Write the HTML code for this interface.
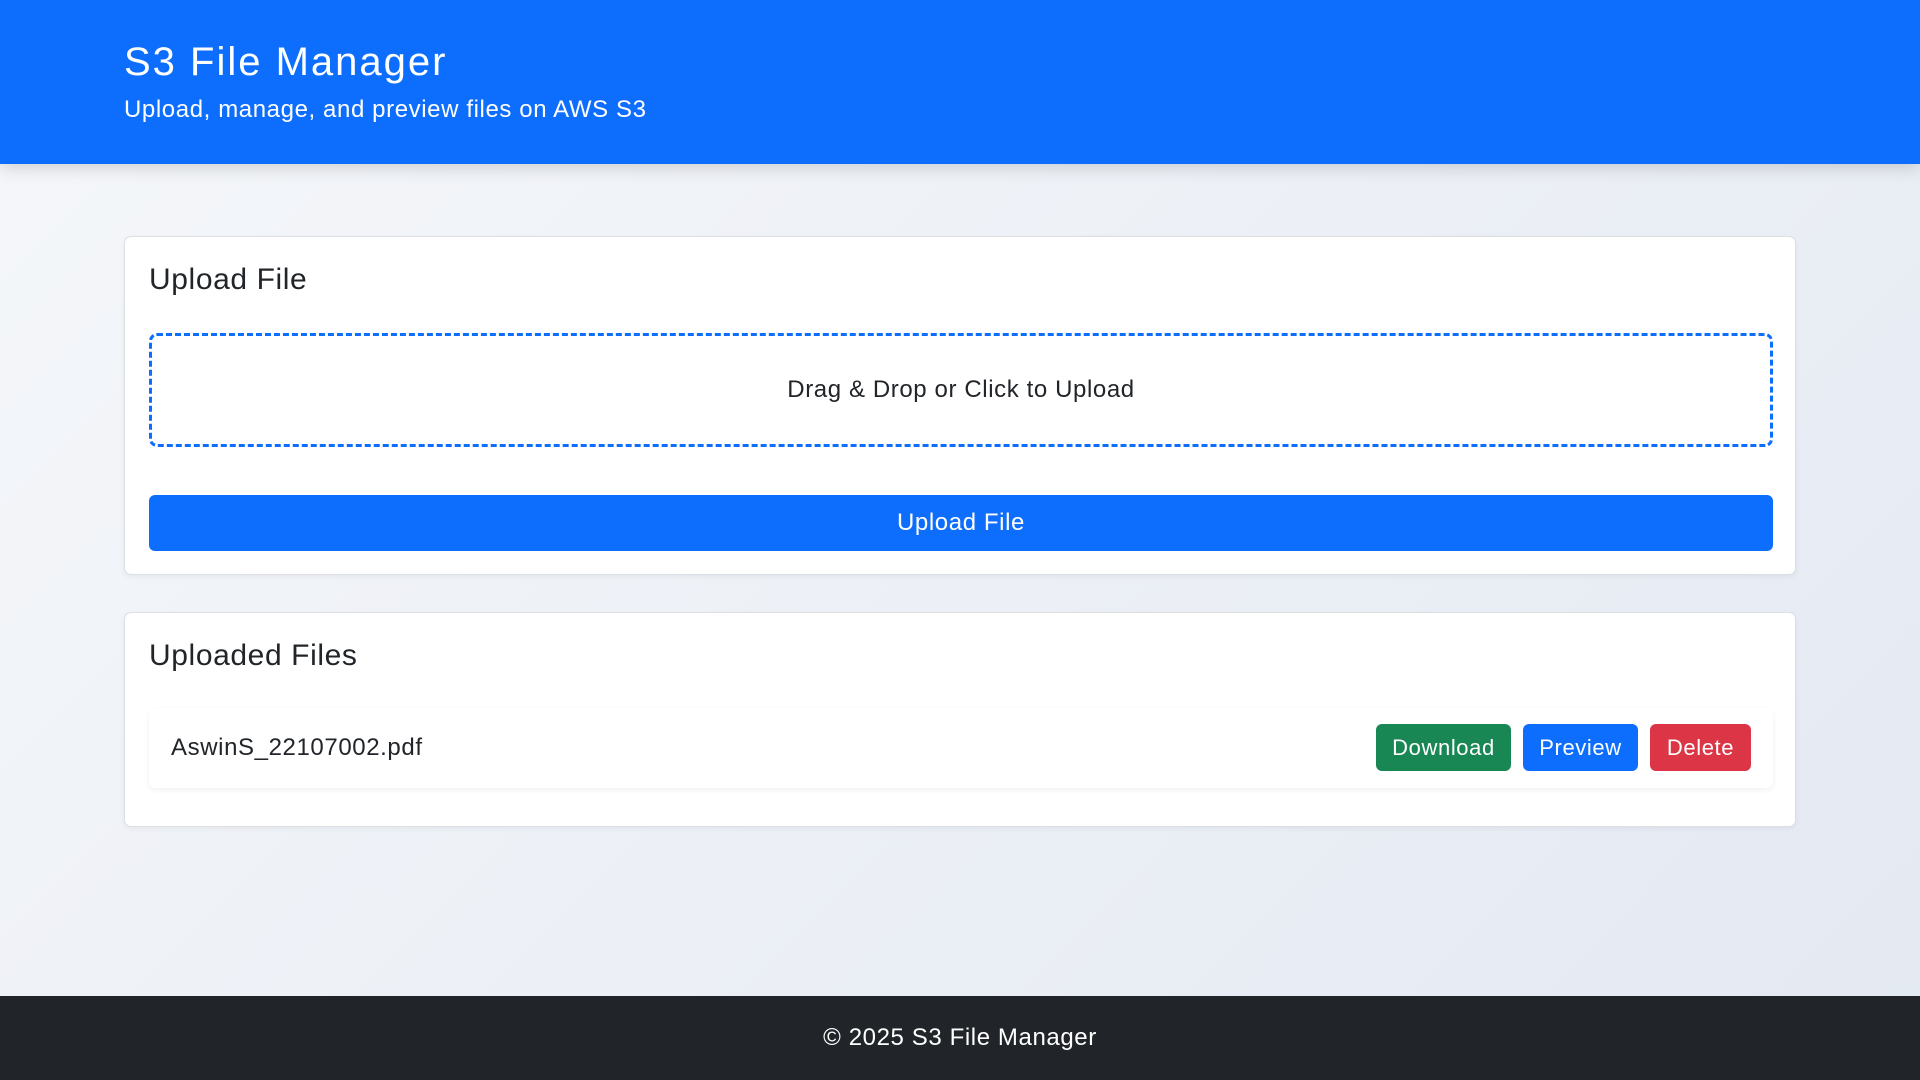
<!DOCTYPE html>
<html><head><meta charset="utf-8"><style>
*{box-sizing:border-box;margin:0;padding:0}
body{width:1920px;height:1080px;overflow:hidden;font-family:"Liberation Sans",sans-serif;background:linear-gradient(135deg,#f5f7fa,#e4e9f2);position:relative;color:#212529;letter-spacing:0.6px}
.hdr{position:absolute;left:0;top:0;width:1920px;height:164px;background:#0d6efd;color:#fff;box-shadow:0 4px 16px rgba(0,0,0,.15)}
.hdr h1{position:absolute;left:124px;top:40px;font-size:40px;font-weight:500;letter-spacing:2px}
.hdr p{position:absolute;left:124px;top:96px;font-size:24px}
.card{position:absolute;left:124px;width:1672px;background:#fff;border:1px solid #dcdfe4;border-radius:7px;box-shadow:0 2px 6px rgba(0,0,0,.05)}
.card h2{position:absolute;left:24px;font-size:30px;font-weight:500}
.drop{position:absolute;left:24px;top:96px;width:1624px;height:114px;border:3px dashed #0d6efd;border-radius:8px;display:flex;align-items:center;justify-content:center;font-size:24px}
.btn{position:absolute;color:#fff;border-radius:6px;display:flex;align-items:center;justify-content:center;font-size:22px}
.row{position:absolute;left:24px;top:95px;width:1624px;height:80px;background:#fff;border-radius:6px;box-shadow:0 2px 6px rgba(0,0,0,.06)}
.ft{position:absolute;left:0;top:996px;width:1920px;height:84px;background:#212529;color:#fff;font-size:24px;display:flex;align-items:center;justify-content:center}
</style></head><body>
<div class="hdr"><h1>S3 File Manager</h1><p>Upload, manage, and preview files on AWS S3</p></div>
<div class="card" style="top:236px;height:339px">
<h2 style="top:26px">Upload File</h2>
<div class="drop">Drag &amp; Drop or Click to Upload</div>
<div class="btn" style="left:24px;top:258px;width:1624px;height:56px;background:#0d6efd;font-size:24px">Upload File</div>
</div>
<div class="card" style="top:612px;height:215px">
<h2 style="top:26px">Uploaded Files</h2>
<div class="row">
<div style="position:absolute;left:22px;top:26px;font-size:24px">AswinS_22107002.pdf</div>
<div class="btn" style="left:1227px;top:16px;width:135px;height:47px;background:#198754">Download</div>
<div class="btn" style="left:1374px;top:16px;width:115px;height:47px;background:#0d6efd">Preview</div>
<div class="btn" style="left:1501px;top:16px;width:101px;height:47px;background:#dc3545">Delete</div>
</div>
</div>
<div class="ft">© 2025 S3 File Manager</div>
</body></html>
